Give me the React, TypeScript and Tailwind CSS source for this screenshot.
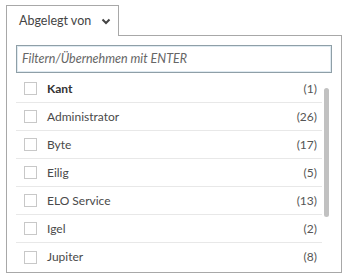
const items = [
  { name: "Kant", count: 1, bold: true },
  { name: "Administrator", count: 26 },
  { name: "Byte", count: 17 },
  { name: "Eilig", count: 5 },
  { name: "ELO Service", count: 13 },
  { name: "Igel", count: 2 },
  { name: "Jupiter", count: 8 },
];

export default function App() {
  return (
    <div
      className="h-[279px] w-[347px] bg-white pl-[6px] pt-[5px] text-[12px] text-[#4a4a4a]"
      style={{ fontFamily: "Lato, 'Open Sans', sans-serif" }}
    >
      <div className="w-[336px]">
        {/* Tab */}
        <div className="relative z-10 -mb-px flex h-[31px] w-[113px] items-center justify-between border border-b-0 border-[#a8a8a8] bg-white pl-[12px] pr-[7px]">
          <span className="text-[12.5px] text-[#444]">Abgelegt von</span>
          <svg width="10" height="7" viewBox="0 0 10 7" className="mt-[1px]">
            <path d="M1.5 1.5 L5 5 L8.5 1.5" fill="none" stroke="#444" strokeWidth="2" />
          </svg>
        </div>

        {/* Panel */}
        <div className="h-[238px] overflow-hidden border border-[#a8a8a8] px-[9px] pt-[9px]">
          <div className="flex h-[28px] items-center border border-[#8f9fa7] bg-white pl-[5px] shadow-[inset_0_0_0_1px_#dfeaf1]">
            <span className="text-[12.5px] italic text-[#666]">Filtern/Übernehmen mit ENTER</span>
          </div>

          <div className="mt-[2px] flex">
            <div className="w-[306px]">
              {items.map((it, i) => (
                <div
                  key={i}
                  className={
                    i < items.length - 1
                      ? "flex h-[28px] items-center border-b border-[#e8e8e8] pl-[8px] pr-[5px]"
                      : "flex h-[28px] items-center pl-[8px] pr-[5px]"
                  }
                >
                  <span className="h-[13px] w-[13px] shrink-0 border border-[#c8c8c8] bg-white" />
                  <span
                    className={
                      it.bold
                        ? "ml-[10px] font-bold text-[#333]"
                        : "ml-[10px]"
                    }
                  >
                    {it.name}
                  </span>
                  <span className="ml-auto text-[#555]">({it.count})</span>
                </div>
              ))}
            </div>
            <div className="ml-[2px] w-[5px] pt-[13px]">
              <div className="h-[129px] w-[5px] rounded-full bg-[#c1c1c1]" />
            </div>
          </div>
        </div>
      </div>
    </div>
  );
}
